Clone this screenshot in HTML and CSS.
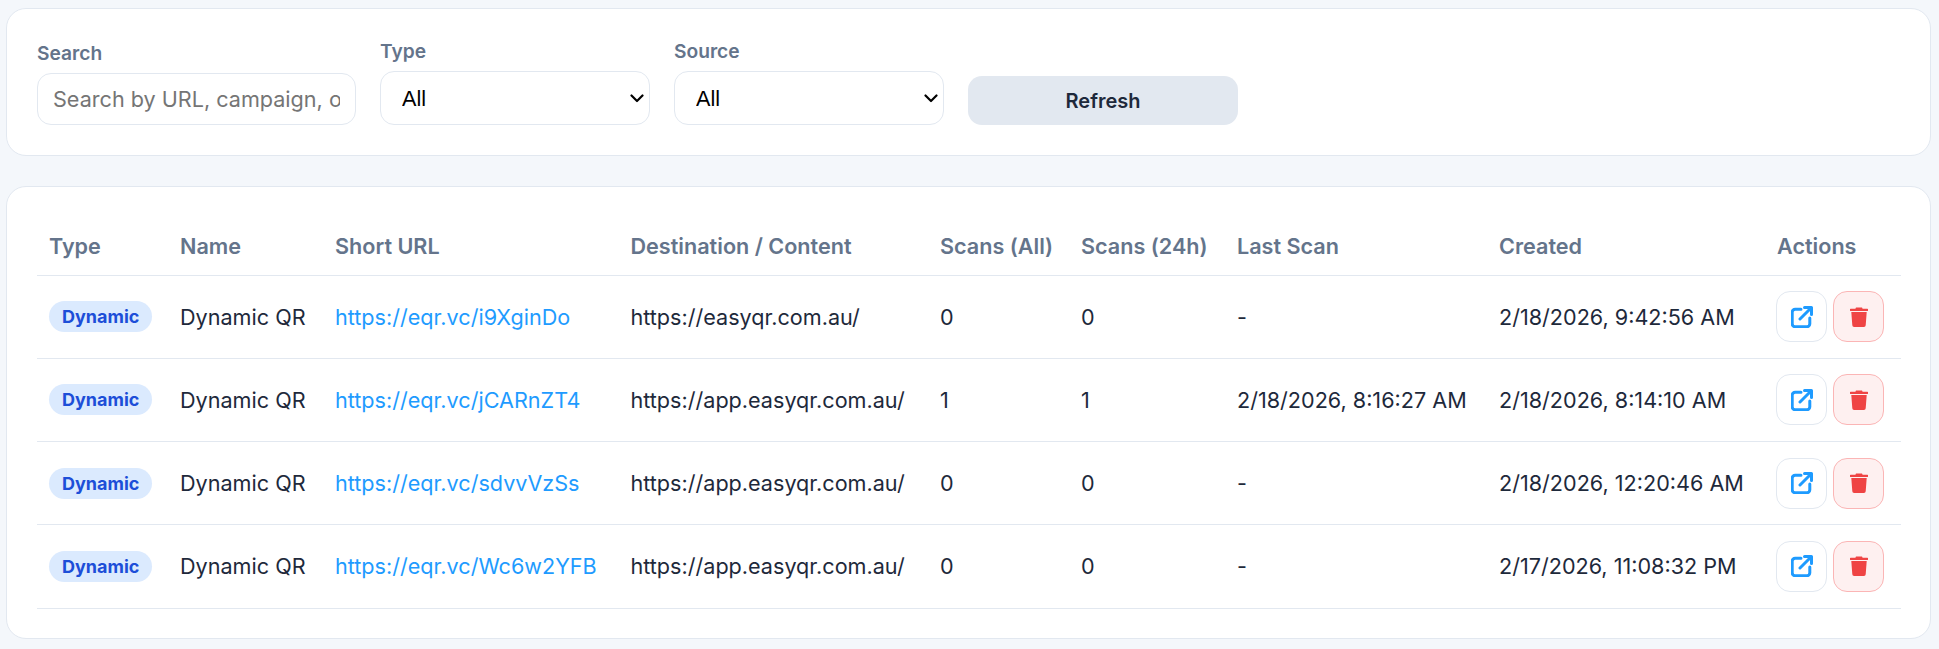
FILE: index.html
```html
<!DOCTYPE html>
<html lang="en">
<head>
<meta charset="utf-8">
<title>QR Codes</title>
<link rel="stylesheet" href="styles.css">
</head>
<body>
<main class="page">
  <section class="card filters">
    <div class="field field-search">
      <label class="label" for="q">Search</label>
      <input class="input" id="q" type="text" placeholder="Search by URL, campaign, or name">
    </div>
    <div class="field">
      <label class="label" for="t">Type</label>
      <select class="select" id="t"><option>All</option></select>
    </div>
    <div class="field">
      <label class="label" for="s">Source</label>
      <select class="select" id="s"><option>All</option></select>
    </div>
    <button class="refresh" type="button">Refresh</button>
  </section>
  <section class="card list">
    <table class="table">
      <colgroup>
        <col class="c-type"><col class="c-name"><col class="c-short"><col class="c-dest"><col class="c-all"><col class="c-day"><col class="c-last"><col class="c-created"><col class="c-actions">
      </colgroup>
      <thead>
        <tr><th>Type</th><th>Name</th><th>Short URL</th><th>Destination / Content</th><th>Scans (All)</th><th>Scans (24h)</th><th>Last Scan</th><th>Created</th><th>Actions</th></tr>
      </thead>
      <tbody>
        <tr>
          <td><span class="badge">Dynamic</span></td><td>Dynamic QR</td><td><a class="link" href="#">https://eqr.vc/i9XginDo</a></td><td>https://easyqr.com.au/</td><td>0</td><td>0</td><td>-</td><td>2/18/2026, 9:42:56 AM</td>
          <td><div class="actions"><button class="icon-btn" type="button"><svg class="ext" viewBox="0 0 22 22"><path d="M10 3.2H4.2a3 3 0 0 0-3 3v11.6a3 3 0 0 0 3 3h11.6a3 3 0 0 0 3-3V12M9 13 20 2M13.5 1.5H20.500V8.500"/></svg></button><button class="icon-btn danger" type="button"><svg class="trash" viewBox="0 0 18 20"><path d="M6 0.600 5.400 1.800H0.700a0.700 0.700 0 0 0 0 2.200H17.300a0.700 0.700 0 0 0 0-2.200H12.600L12 0.600ZM1.300 5 2.300 18.200a1.800 1.800 0 0 0 1.800 1.700H13.900a1.800 1.800 0 0 0 1.800-1.700L16.700 5Z"/></svg></button></div></td>
        </tr>
        <tr>
          <td><span class="badge">Dynamic</span></td><td>Dynamic QR</td><td><a class="link" href="#">https://eqr.vc/jCARnZT4</a></td><td>https://app.easyqr.com.au/</td><td>1</td><td>1</td><td>2/18/2026, 8:16:27 AM</td><td>2/18/2026, 8:14:10 AM</td>
          <td><div class="actions"><button class="icon-btn" type="button"><svg class="ext" viewBox="0 0 22 22"><path d="M10 3.2H4.2a3 3 0 0 0-3 3v11.6a3 3 0 0 0 3 3h11.6a3 3 0 0 0 3-3V12M9 13 20 2M13.5 1.5H20.500V8.500"/></svg></button><button class="icon-btn danger" type="button"><svg class="trash" viewBox="0 0 18 20"><path d="M6 0.600 5.400 1.800H0.700a0.700 0.700 0 0 0 0 2.200H17.300a0.700 0.700 0 0 0 0-2.200H12.600L12 0.600ZM1.300 5 2.300 18.200a1.800 1.800 0 0 0 1.800 1.700H13.900a1.800 1.800 0 0 0 1.800-1.700L16.700 5Z"/></svg></button></div></td>
        </tr>
        <tr>
          <td><span class="badge">Dynamic</span></td><td>Dynamic QR</td><td><a class="link" href="#">https://eqr.vc/sdvvVzSs</a></td><td>https://app.easyqr.com.au/</td><td>0</td><td>0</td><td>-</td><td>2/18/2026, 12:20:46 AM</td>
          <td><div class="actions"><button class="icon-btn" type="button"><svg class="ext" viewBox="0 0 22 22"><path d="M10 3.2H4.2a3 3 0 0 0-3 3v11.6a3 3 0 0 0 3 3h11.6a3 3 0 0 0 3-3V12M9 13 20 2M13.5 1.5H20.500V8.500"/></svg></button><button class="icon-btn danger" type="button"><svg class="trash" viewBox="0 0 18 20"><path d="M6 0.600 5.400 1.800H0.700a0.700 0.700 0 0 0 0 2.200H17.300a0.700 0.700 0 0 0 0-2.200H12.600L12 0.600ZM1.300 5 2.300 18.200a1.800 1.800 0 0 0 1.800 1.700H13.900a1.800 1.800 0 0 0 1.800-1.700L16.700 5Z"/></svg></button></div></td>
        </tr>
        <tr>
          <td><span class="badge">Dynamic</span></td><td>Dynamic QR</td><td><a class="link" href="#">https://eqr.vc/Wc6w2YFB</a></td><td>https://app.easyqr.com.au/</td><td>0</td><td>0</td><td>-</td><td>2/17/2026, 11:08:32 PM</td>
          <td><div class="actions"><button class="icon-btn" type="button"><svg class="ext" viewBox="0 0 22 22"><path d="M10 3.2H4.2a3 3 0 0 0-3 3v11.6a3 3 0 0 0 3 3h11.6a3 3 0 0 0 3-3V12M9 13 20 2M13.5 1.5H20.500V8.500"/></svg></button><button class="icon-btn danger" type="button"><svg class="trash" viewBox="0 0 18 20"><path d="M6 0.600 5.400 1.800H0.700a0.700 0.700 0 0 0 0 2.200H17.300a0.700 0.700 0 0 0 0-2.200H12.600L12 0.600ZM1.300 5 2.300 18.200a1.800 1.800 0 0 0 1.800 1.700H13.900a1.800 1.800 0 0 0 1.800-1.700L16.700 5Z"/></svg></button></div></td>
        </tr>
      </tbody>
    </table>
  </section>
</main>
</body>
</html>
```

FILE: styles.css
```css
* { box-sizing: border-box; }
html, body { margin: 0; height: 100%; }
body {
  background: #f4f7fb;
  color: #1e293b;
  font-family: Inter, "Liberation Sans", sans-serif;
  font-size: 21.6px;
  overflow: hidden;
}
.page {
  display: flex;
  flex-direction: column;
  gap: 30px;
  padding: 8px 8px 10px 6px;
}
.card {
  background: #fff;
  border: 1px solid #e2e8f0;
  border-radius: 20px;
}
.filters {
  display: flex;
  align-items: flex-end;
  gap: 24px;
  height: 148px;
  padding: 0 30px 30px;
}
.field { display: flex; flex-direction: column; width: 270px; }
.field-search { width: 319px; }
.label {
  color: #64748b;
  font-size: 19.2px;
  font-weight: 600;
  line-height: 23px;
  margin-bottom: 8px;
}
.input, .select {
  background: #fff;
  border: 1px solid #e2e8f0;
  border-radius: 14px;
  font-size: 21.6px;
  outline: none;
  width: 100%;
}
.input {
  color: #1e293b;
  font-family: Inter, sans-serif;
  height: 52px;
  padding: 0 15px;
}
.input::placeholder { color: #757575; opacity: 1; }
.select {
  appearance: none;
  background: #fff url("data:image/svg+xml,%3Csvg xmlns='http://www.w3.org/2000/svg' viewBox='0 0 14 9'%3E%3Cpath d='M1.500 1.500 7 7l5.500-5.500' fill='none' stroke='%23000' stroke-width='2.200' stroke-linecap='round' stroke-linejoin='round'/%3E%3C/svg%3E") no-repeat right 5px center / 14px 9px;
  color: #000;
  font-family: "Liberation Sans", Arial, sans-serif;
  height: 54px;
  padding: 0 24px 0 21px;
}
.refresh {
  background: #e2e8f0;
  border: 0;
  border-radius: 14px;
  color: #1e293b;
  font-family: Inter, sans-serif;
  font-size: 20px;
  font-weight: 600;
  height: 49px;
  width: 270px;
}
.list { height: 453px; padding: 30px 29px 0 30px; }
.table {
  border-collapse: collapse;
  table-layout: fixed;
  width: 100%;
}
.c-type { width: 131px; }
.c-name { width: 155px; }
.c-short { width: 295.500px; }
.c-dest { width: 309.500px; }
.c-all { width: 141px; }
.c-day { width: 156px; }
.c-last { width: 262px; }
.c-created { width: 278px; }
.c-actions { width: 136px; }
th, td {
  border-bottom: 1px solid #e2e8f0;
  padding: 0 12px;
  text-align: left;
  white-space: nowrap;
}
th {
  color: #64748b;
  font-weight: 600;
  height: 58px;
}
td { height: 83.25px; }
.link { color: #1e9bff; text-decoration: none; }
.badge {
  background: #dbeafe;
  border-radius: 999px;
  color: #1d4ed8;
  display: inline-block;
  font-size: 18px;
  font-weight: 700;
  line-height: 31px;
  padding: 0 13px;
  vertical-align: middle;
}
.actions { display: flex; gap: 6px; margin-left: -1px; }
.icon-btn {
  align-items: center;
  background: #fff;
  border: 1px solid #e2e8f0;
  border-radius: 14px;
  display: flex;
  flex: none;
  height: 51px;
  justify-content: center;
  padding: 0;
  width: 51px;
}
.danger { background: #fef0f0; border-color: #fbb5b5; }
.ext {
  fill: none;
  height: 22px;
  stroke: #1e9bff;
  stroke-linecap: round;
  stroke-linejoin: round;
  stroke-width: 3;
  width: 22px;
}
.trash { fill: #ef4444; height: 20px; width: 18px; }
```
